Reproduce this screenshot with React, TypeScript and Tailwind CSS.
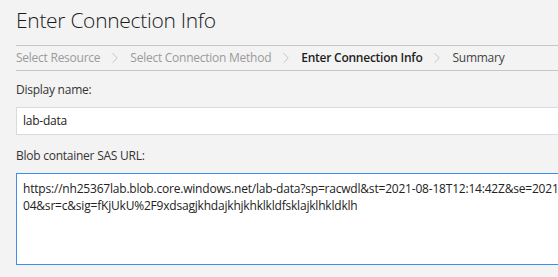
import { ChevronRight } from "lucide-react";

const steps = [
  { label: "Select Resource", state: "done" },
  { label: "Select Connection Method", state: "done" },
  { label: "Enter Connection Info", state: "current" },
  { label: "Summary", state: "next" },
];

export default function App() {
  return (
    <div className="w-[558px] h-[277px] overflow-hidden bg-[#f3f3f3] pl-4 font-['Open_Sans',sans-serif] text-[#1e1e1e] tracking-[-0.25px]">
      <h1 className="pt-[5px] h-[45px] text-[21px] leading-[30px] font-light text-[#1b1b1b] whitespace-nowrap tracking-[-0.3px]">
        Enter Connection Info
      </h1>

      <div className="border-y border-[#c6c6c6] h-[26px] flex items-center gap-[6px] text-[12px] whitespace-nowrap">
        {steps.map((step, i) => (
          <div key={step.label} className="flex items-center gap-[6px]">
            {i > 0 && (
              <ChevronRight className="w-[18px] h-[18px] text-[#b4b4b4]" strokeWidth={1} />
            )}
            <span
              className={
                step.state === "done"
                  ? "text-[#9a9a9a]"
                  : step.state === "current"
                    ? "font-semibold text-[#1e1e1e]"
                    : "text-[#444]"
              }
            >
              {step.label}
            </span>
          </div>
        ))}
      </div>

      <div className="pt-[11px] text-[12px] leading-[16px] text-[#333]">Display name:</div>
      <div className="mt-[9px] h-[28px] w-[600px] bg-white border border-[#d6dbe3] flex items-center px-[6px] text-[12px] text-[#222]">
        lab-data
      </div>

      <div className="pt-[13px] text-[12px] leading-[16px] text-[#333]">Blob container SAS URL:</div>
      <div className="mt-[9px] h-[92px] w-[600px] bg-white border-[1.5px] border-[#3e8ef0] px-[6px] pt-[6px] text-[12px] leading-[17px] text-[#222] tracking-[-0.2px]">
        <div className="whitespace-nowrap">
          https://nh25367lab.blob.core.windows.net/lab-data?sp=racwdl&amp;st=2021-08-18T12:14:42Z&amp;se=2021-
        </div>
        <div className="whitespace-nowrap">
          04&amp;sr=c&amp;sig=fKjUkU%2F9xdsagjkhdajkhjkhklkldfsklajklhkldklh
        </div>
      </div>
    </div>
  );
}
